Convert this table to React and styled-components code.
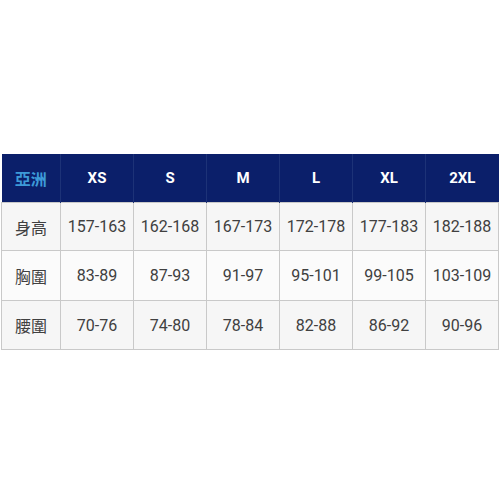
import React from "react";
import styled, { createGlobalStyle } from "styled-components";

const Global = createGlobalStyle`
  html, body { margin: 0; padding: 0; background: #ffffff; }
  body { font-family: Roboto, "Noto Sans CJK TC", sans-serif; }
`;

const Page = styled.div`
  width: 501px;
  height: 501px;
  padding: 154px 0 0 1px;
  box-sizing: border-box;
`;

const Table = styled.table`
  border-collapse: collapse;
  table-layout: fixed;
  width: 497px;
`;

const HeadCell = styled.th`
  background: #0b1f6a;
  color: ${(p) => (p.$accent ? "#3d9ad8" : "#ffffff")};
  font-family: ${(p) => (p.$accent ? `"Noto Sans CJK TC", sans-serif` : `Roboto, "Liberation Sans", sans-serif`)};
  font-weight: 700;
  font-size: ${(p) => (p.$accent ? "16px" : "15px")};
  height: 48px;
  padding: 0;
  text-align: center;
  border-left: 1px solid #1d3277;
  &:first-child { border-left: none; }
`;

const Cell = styled.td`
  background: ${(p) => (p.$alt ? "#fbfbfb" : "#f6f6f6")};
  color: #404040;
  font-family: ${(p) => (p.$label ? `"Noto Sans CJK TC", sans-serif` : `Roboto, "Liberation Sans", sans-serif`)};
  font-size: 16px;
  height: ${(p) => p.$h}px;
  padding: 0;
  text-align: center;
  border: 1px solid #c9c9c9;
  box-sizing: border-box;
`;

const sizes = ["XS", "S", "M", "L", "XL", "2XL"];
const rows = [
  { label: "身高", h: 48, values: ["157-163", "162-168", "167-173", "172-178", "177-183", "182-188"] },
  { label: "胸圍", h: 50, values: ["83-89", "87-93", "91-97", "95-101", "99-105", "103-109"] },
  { label: "腰圍", h: 49, values: ["70-76", "74-80", "78-84", "82-88", "86-92", "90-96"] },
];

export default function App() {
  return (
    <Page>
      <Global />
      <Table>
        <colgroup>
          <col style={{ width: 59 }} />
          {sizes.map((s) => (
            <col key={s} style={{ width: 73 }} />
          ))}
        </colgroup>
        <thead>
          <tr>
            <HeadCell $accent>亞洲</HeadCell>
            {sizes.map((s) => (
              <HeadCell key={s}>{s}</HeadCell>
            ))}
          </tr>
        </thead>
        <tbody>
          {rows.map((r, i) => (
            <tr key={r.label}>
              <Cell $label $h={r.h} $alt={i === 1}>{r.label}</Cell>
              {r.values.map((v) => (
                <Cell key={v} $h={r.h} $alt={i === 1}>{v}</Cell>
              ))}
            </tr>
          ))}
        </tbody>
      </Table>
    </Page>
  );
}
